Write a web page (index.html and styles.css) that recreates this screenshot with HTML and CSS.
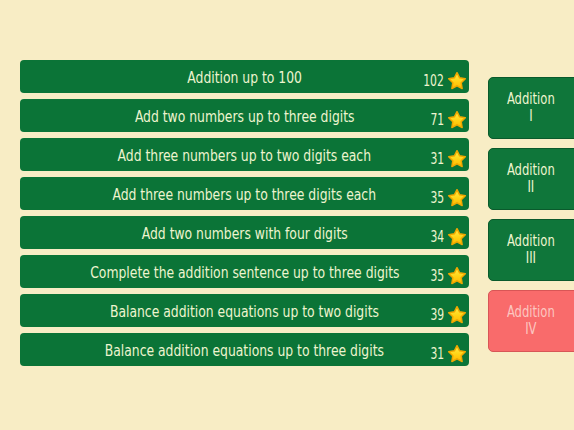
FILE: index.html
```html
<!DOCTYPE html>
<html>
<head>
<meta charset="utf-8">
<link rel="stylesheet" href="styles.css">
</head>
<body>
<svg class="defs" width="0" height="0" aria-hidden="true">
  <defs>
    <linearGradient id="starFill" x1="0" y1="0" x2="0" y2="1">
      <stop offset="0" stop-color="#fff04a"/>
      <stop offset="0.55" stop-color="#ffd316"/>
      <stop offset="1" stop-color="#ffb800"/>
    </linearGradient>
    <symbol id="star" viewBox="0 0 24 24">
      <path d="M12 2 L15.12 8.21 L21.99 9.26 L17.04 14.14 L18.17 21 L12 17.8 L5.83 21 L6.96 14.14 L2.01 9.26 L8.88 8.21 Z"/>
    </symbol>
  </defs>
</svg>
<div class="page">
  <div class="list">
    <div class="row"><span></span><span class="title">Addition up to 100</span><span class="score"><span class="num">102</span><svg class="star"><use href="#star"/></svg></span></div>
    <div class="row"><span></span><span class="title">Add two numbers up to three digits</span><span class="score"><span class="num">71</span><svg class="star"><use href="#star"/></svg></span></div>
    <div class="row"><span></span><span class="title">Add three numbers up to two digits each</span><span class="score"><span class="num">31</span><svg class="star"><use href="#star"/></svg></span></div>
    <div class="row"><span></span><span class="title">Add three numbers up to three digits each</span><span class="score"><span class="num">35</span><svg class="star"><use href="#star"/></svg></span></div>
    <div class="row"><span></span><span class="title">Add two numbers with four digits</span><span class="score"><span class="num">34</span><svg class="star"><use href="#star"/></svg></span></div>
    <div class="row"><span></span><span class="title">Complete the addition sentence up to three digits</span><span class="score"><span class="num">35</span><svg class="star"><use href="#star"/></svg></span></div>
    <div class="row"><span></span><span class="title">Balance addition equations up to two digits</span><span class="score"><span class="num">39</span><svg class="star"><use href="#star"/></svg></span></div>
    <div class="row"><span></span><span class="title">Balance addition equations up to three digits</span><span class="score"><span class="num">31</span><svg class="star"><use href="#star"/></svg></span></div>
  </div>
  <div class="levels">
    <div class="level"><span class="lvl-text">Addition<br>I</span></div>
    <div class="level"><span class="lvl-text">Addition<br>II</span></div>
    <div class="level"><span class="lvl-text">Addition<br>III</span></div>
    <div class="level active"><span class="lvl-text">Addition<br>IV</span></div>
  </div>
</div>
</body>
</html>
```
FILE: styles.css
```css
html, body {
  margin: 0;
  padding: 0;
  background: #f8edc5;
  width: 574px;
  height: 430px;
  overflow: hidden;
}
.defs {
  position: absolute;
  width: 0;
  height: 0;
}
.page {
  display: flex;
  align-items: flex-start;
  font-family: "DejaVu Sans Condensed", "Liberation Sans", sans-serif;
  color: #eef4cf;
}
.list {
  flex-shrink: 0;
  margin: 60px 0 0 20px;
  width: 449px;
  display: flex;
  flex-direction: column;
  gap: 6px;
}
.row {
  height: 33px;
  background: #0b7437;
  border-radius: 4px;
  display: grid;
  grid-template-columns: 1fr auto 1fr;
  align-items: center;
  font-size: 16px;
}
.title {
  white-space: nowrap;
  transform: scaleX(0.86);
  transform-origin: center;
  margin-top: 2px;
}
.score {
  justify-self: end;
  display: flex;
  align-items: center;
  gap: 3px;
  padding-right: 2px;
  margin-top: 8px;
}
.num {
  font-size: 15px;
  transform: scaleX(0.8);
  transform-origin: right center;
}
.star {
  width: 20px;
  height: 20px;
  fill: url(#starFill);
  stroke: #f0a800;
  stroke-width: 1.8;
  stroke-linejoin: round;
}
.levels {
  flex-shrink: 0;
  margin: 77px 0 0 19px;
  display: flex;
  flex-direction: column;
  gap: 9px;
}
.level {
  width: 92px;
  height: 62px;
  box-sizing: border-box;
  background: #0f763a;
  border: 1px solid #0a5a2c;
  border-radius: 5px;
  display: flex;
  justify-content: center;
  align-items: center;
  text-align: center;
  font-size: 15px;
  line-height: 17px;
  padding-right: 6px;
}
.lvl-text {
  transform: scaleX(0.86);
}
.level.active {
  background: #f96b6b;
  border-color: #d85656;
  color: #fcc6c0;
}
```
